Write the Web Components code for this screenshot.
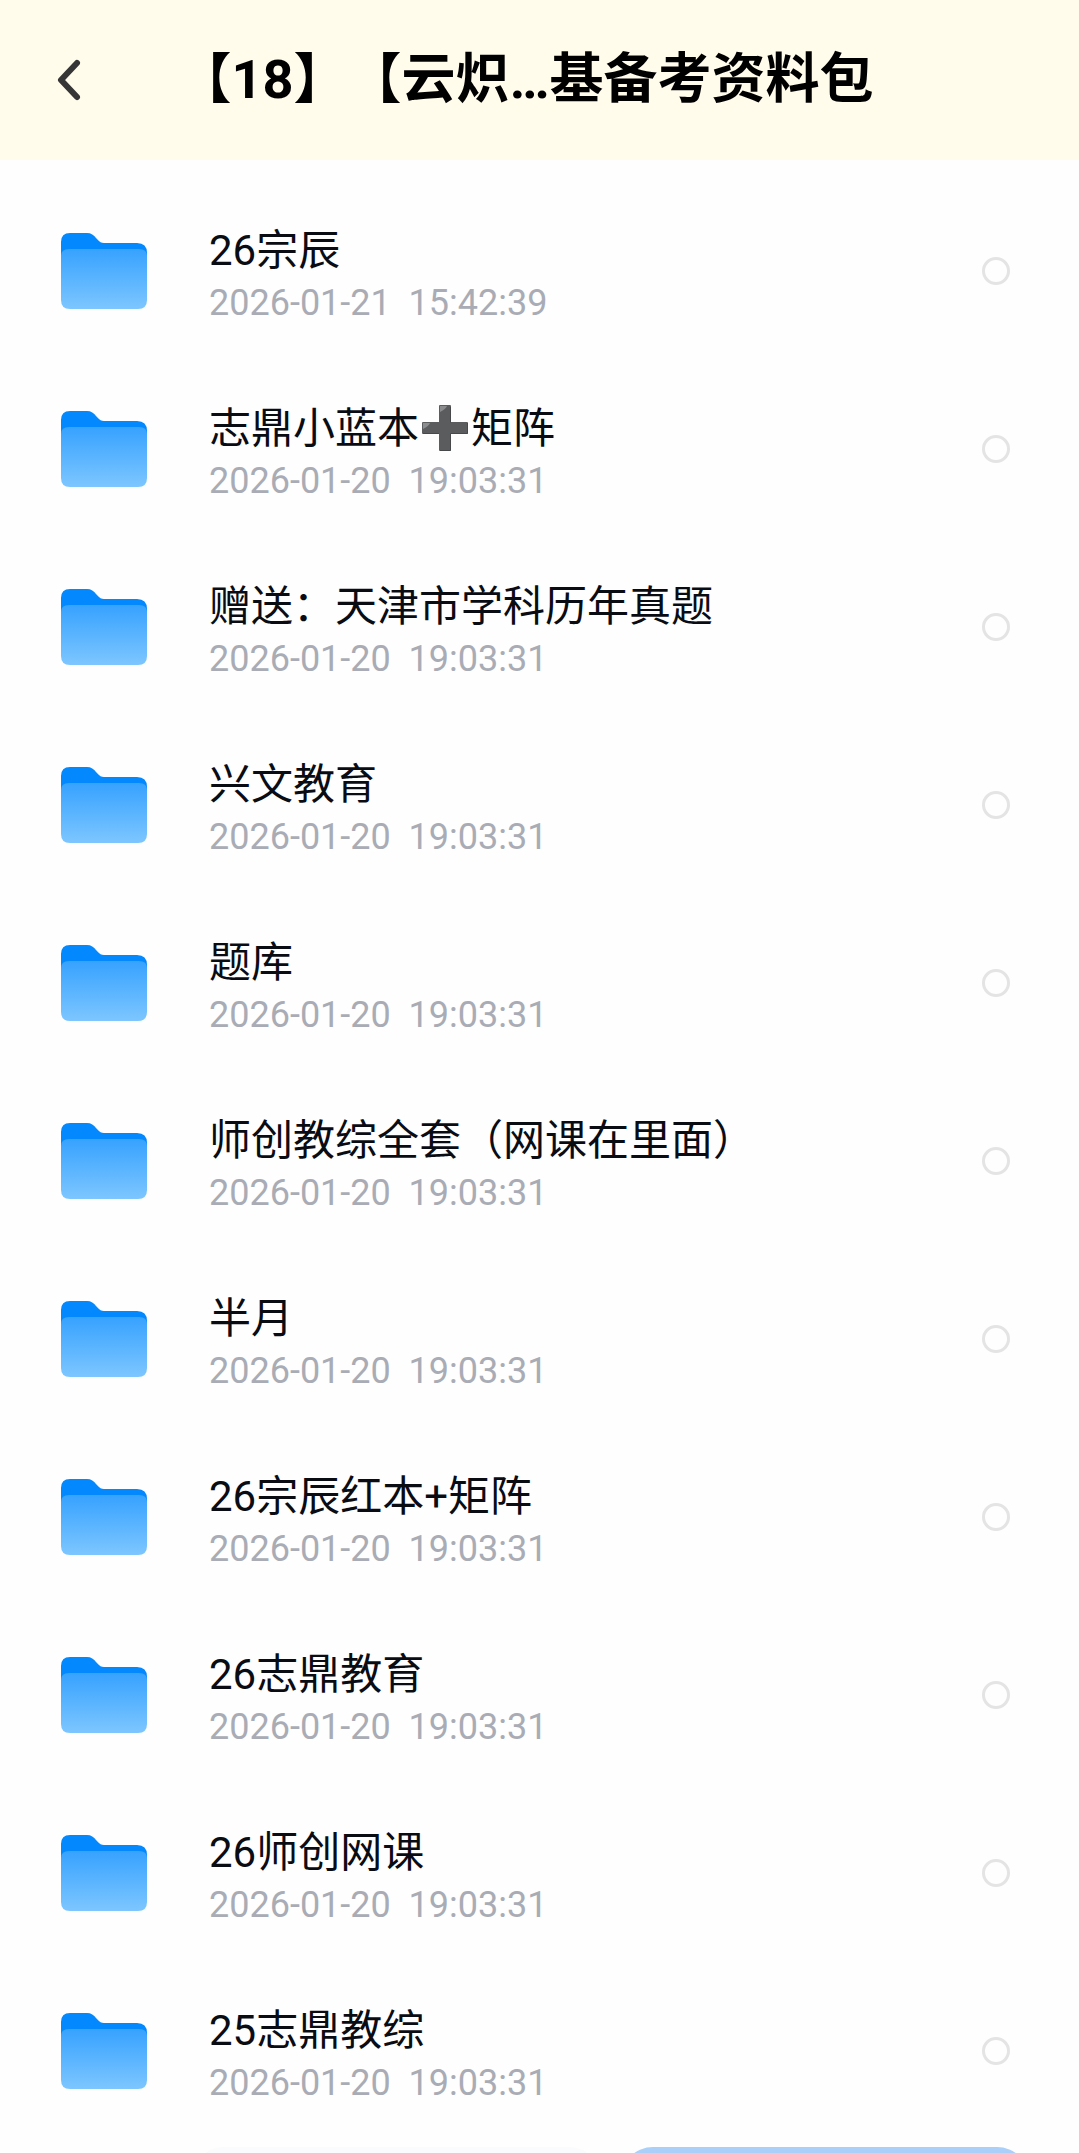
<!DOCTYPE html>
<html lang="zh-CN">
<head>
<meta charset="UTF-8">
<meta name="viewport" content="width=device-width, initial-scale=1">
<title>备考资料包</title>
<style>
  body {
    margin: 0;
    background: #fefefe;
    color: #0a0c14;
    font-family: Roboto, "Noto Sans CJK SC", sans-serif;
    --color-header: #fffcec;
    --color-muted: #a9acb5;
    --color-ring: #e4e4e4;
    --color-save: #aacff9;
    --side: 60px;
  }
</style>
</head>
<body>
<file-browser>
  <nav-header slot="header">【18】【云炽…基备考资料包</nav-header>
  <folder-row time="2026-01-21  15:42:39">26宗辰</folder-row>
  <folder-row time="2026-01-20  19:03:31">志鼎小蓝本<plus-mark></plus-mark>矩阵</folder-row>
  <folder-row time="2026-01-20  19:03:31">赠送：天津市学科历年真题</folder-row>
  <folder-row time="2026-01-20  19:03:31">兴文教育</folder-row>
  <folder-row time="2026-01-20  19:03:31">题库</folder-row>
  <folder-row time="2026-01-20  19:03:31">师创教综全套（网课在里面）</folder-row>
  <folder-row time="2026-01-20  19:03:31">半月</folder-row>
  <folder-row time="2026-01-20  19:03:31">26宗辰红本+矩阵</folder-row>
  <folder-row time="2026-01-20  19:03:31">26志鼎教育</folder-row>
  <folder-row time="2026-01-20  19:03:31">26师创网课</folder-row>
  <folder-row time="2026-01-20  19:03:31">25志鼎教综</folder-row>
  <action-bar slot="footer"></action-bar>
</file-browser>

<script>
class FileBrowser extends HTMLElement {
  constructor() {
    super();
    this.attachShadow({ mode: 'open' });
    this.shadowRoot.innerHTML = `
      <style>
        :host {
          display: flex;
          flex-direction: column;
          height: 100vh;
          overflow: hidden;
        }
        main {
          flex: none;
          padding-top: 22px;
        }
      </style>
      <slot name="header"></slot>
      <main><slot></slot></main>
      <slot name="footer"></slot>
    `;
  }
}

class NavHeader extends HTMLElement {
  constructor() {
    super();
    this.attachShadow({ mode: 'open' });
    this.shadowRoot.innerHTML = `
      <style>
        :host { display: block; flex: none; }
        header {
          display: grid;
          grid-template-columns: 120px 1fr 148px;
          align-items: center;
          height: 160px;
          background: var(--color-header);
        }
        button {
          display: flex;
          margin: 0 0 0 48px;
          padding: 0;
          width: 44px;
          border: 0;
          background: none;
          cursor: pointer;
        }
        h1 {
          margin: 0;
          font-size: 54px;
          line-height: 64px;
          font-weight: 700;
          color: #000;
          text-align: center;
          white-space: nowrap;
          text-spacing-trim: space-all;
        }
      </style>
      <header>
        <button type="button" aria-label="返回">
          <svg width="44" height="44" viewBox="0 0 44 44" fill="none" stroke="#363636" stroke-width="6" stroke-linecap="round" stroke-linejoin="round">
            <path d="M29 5L13 22L29 39"/>
          </svg>
        </button>
        <h1><slot></slot></h1>
      </header>
    `;
  }
}

class FolderIcon extends HTMLElement {
  constructor() {
    super();
    this.attachShadow({ mode: 'open' });
    this.shadowRoot.innerHTML = `
      <style>
        :host { display: block; }
        svg { display: block; }
      </style>
      <svg width="88" height="76" viewBox="0 0 88 76" aria-hidden="true">
        <defs>
          <linearGradient id="front" x1="0" y1="0" x2="0" y2="1">
            <stop offset="0" stop-color="#37a2ff"/>
            <stop offset="1" stop-color="#7dc6ff"/>
          </linearGradient>
        </defs>
        <path fill="#0388fd" d="M1 9Q1 0 10 0H27C31 0 34 2 36 5L39 8C41 10 43 10 46 10H77Q87 10 87 20V50H1Z"/>
        <path fill="url(#front)" d="M1 23Q1 16 9 16H79Q87 16 87 23V67Q87 76 78 76H10Q1 76 1 67Z"/>
      </svg>
    `;
  }
}

// Heavy plus sign that sits inline in a folder name
class PlusMark extends HTMLElement {
  constructor() {
    super();
    this.attachShadow({ mode: 'open' });
    this.shadowRoot.innerHTML = `
      <style>
        :host {
          display: inline-block;
          width: 52px;
          height: 46px;
          vertical-align: -8px;
          white-space: normal;
        }
        svg { display: block; margin: 0 auto; }
      </style>
      <svg width="46" height="46" viewBox="0 0 46 46" role="img" aria-label="加">
        <path fill="#5b5c5e" d="M18 0H28Q29 0 29 1V17H45Q46 17 46 18V28Q46 29 45 29H29V45Q29 46 28 46H18Q17 46 17 45V29H1Q0 29 0 28V18Q0 17 1 17H17V1Q17 0 18 0Z"/>
        <path fill="#8b8c8e" d="M18 1H25Q24 4 18 7ZM1 18H8Q7 21 1 24Z"/>
        <path fill="none" stroke="#47484a" d="M28.500 2V17.500M45.500 18V28.500H28.500V45.500H18M17 28.500H1"/>
      </svg>
    `;
  }
}

class FolderRow extends HTMLElement {
  constructor() {
    super();
    this.attachShadow({ mode: 'open' });
  }

  connectedCallback() {
    const time = this.getAttribute('time') || '';
    this.shadowRoot.innerHTML = `
      <style>
        :host { display: block; }
        .row {
          display: flex;
          align-items: center;
          height: 178px;
          padding: 0 69px 0 var(--side);
        }
        label {
          flex: 1;
          min-width: 0;
          margin-left: 61px;
          padding-top: 8px;
        }
        .name, time {
          display: block;
          white-space: pre;
        }
        .name {
          height: 56px;
          font-size: 42px;
          line-height: 56px;
        }
        time {
          font-size: 36px;
          line-height: 48px;
          color: var(--color-muted);
        }
        input {
          appearance: none;
          box-sizing: border-box;
          width: 28px;
          height: 28px;
          margin: 0;
          border: 3px solid var(--color-ring);
          border-radius: 50%;
          cursor: pointer;
        }
        input:checked {
          border-color: #0388fd;
          background: #0388fd;
        }
      </style>
      <div class="row">
        <folder-icon></folder-icon>
        <label for="pick">
          <span class="name"><slot></slot></span>
          <time>${time}</time>
        </label>
        <input id="pick" type="checkbox">
      </div>
    `;
  }
}

class ActionBar extends HTMLElement {
  constructor() {
    super();
    this.attachShadow({ mode: 'open' });
    this.shadowRoot.innerHTML = `
      <style>
        :host { display: block; flex: none; }
        .bar {
          display: grid;
          grid-template-columns: 1fr 1fr;
          gap: 20px;
          padding: 7px 50px 40px 192px;
        }
        button {
          height: 112px;
          border: 0;
          border-radius: 32px;
          background: #fafbfd;
        }
        .save { background: var(--color-save); }
      </style>
      <div class="bar">
        <button type="button" aria-label="下载"></button>
        <button type="button" class="save" aria-label="保存"></button>
      </div>
    `;
  }
}

customElements.define('file-browser', FileBrowser);
customElements.define('nav-header', NavHeader);
customElements.define('folder-icon', FolderIcon);
customElements.define('plus-mark', PlusMark);
customElements.define('folder-row', FolderRow);
customElements.define('action-bar', ActionBar);
</script>
</body>
</html>
